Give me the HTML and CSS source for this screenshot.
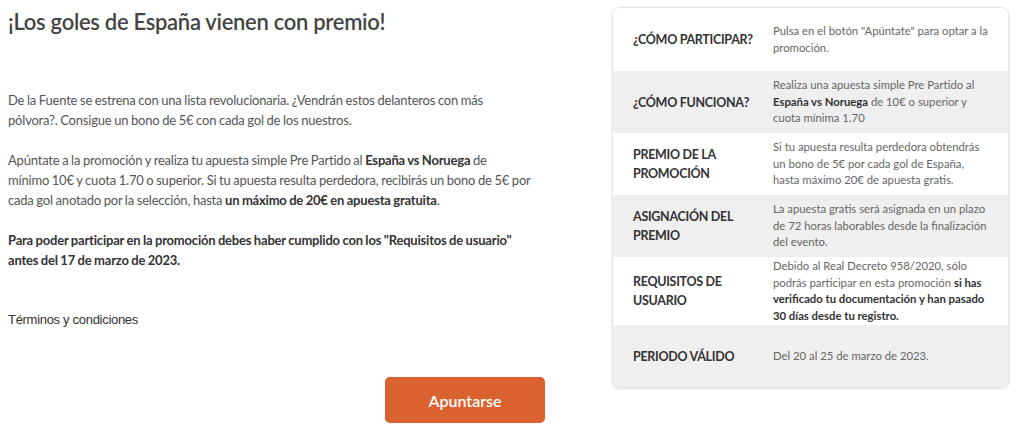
FILE: index.html
```html
<!DOCTYPE html>
<html lang="es">
<head>
    <meta charset="UTF-8">
    <meta name="viewport" content="width=device-width, initial-scale=1.0">
    <title>¡Los goles de España vienen con premio!</title>
    <link rel="stylesheet" href="styles.css">
</head>
<body>
    <div class="page">
        <div class="promo">
            <h1 class="promo-title">¡Los goles de España vienen con premio!</h1>

            <div class="promo-text">
                <p>De la Fuente se estrena con una lista revolucionaria. ¿Vendrán estos delanteros con más pólvora?. Consigue un bono de 5€ con cada gol de los nuestros.</p>
                <p>Apúntate a la promoción y realiza tu apuesta simple Pre Partido al <strong>España vs Noruega</strong> de mínimo&nbsp;10€ y cuota 1.70 o superior. Si tu apuesta resulta perdedora, recibirás un bono de 5€ por cada gol anotado por la selección, hasta <strong>un máximo de 20€ en apuesta gratuita</strong>.</p>
                <p><strong>Para poder participar en la promoción debes haber cumplido con los "Requisitos de usuario" antes del 17 de marzo de 2023.</strong></p>
            </div>

            <div class="terms">Términos y condiciones</div>

            <div class="promo-actions">
                <button class="btn-join">Apuntarse</button>
            </div>
        </div>

        <div class="info-card">
            <div class="info-row">
                <div class="info-label">¿CÓMO PARTICIPAR?</div>
                <div class="info-value">Pulsa en el botón "Apúntate" para optar a la promoción.</div>
            </div>
            <div class="info-row alt">
                <div class="info-label">¿CÓMO FUNCIONA?</div>
                <div class="info-value">Realiza una apuesta simple Pre Partido al <strong>España vs Noruega</strong> de 10€ o superior y cuota mínima 1.70</div>
            </div>
            <div class="info-row">
                <div class="info-label">PREMIO DE LA PROMOCIÓN</div>
                <div class="info-value">Si tu apuesta resulta perdedora obtendrás un bono de 5€ por cada gol de España, hasta máximo 20€ de apuesta gratis.</div>
            </div>
            <div class="info-row alt">
                <div class="info-label">ASIGNACIÓN DEL PREMIO</div>
                <div class="info-value">La apuesta gratis será asignada en un plazo de 72 horas laborables desde la finalización del evento.</div>
            </div>
            <div class="info-row">
                <div class="info-label">REQUISITOS DE USUARIO</div>
                <div class="info-value">Debido al Real Decreto 958/2020, sólo podrás participar en esta promoción <strong>si has verificado tu documentación y han pasado 30 días desde tu registro.</strong></div>
            </div>
            <div class="info-row alt">
                <div class="info-label">PERIODO VÁLIDO</div>
                <div class="info-value">Del 20 al 25 de marzo de 2023.</div>
            </div>
        </div>
    </div>
</body>
</html>
```

FILE: styles.css
```css
body {
    margin: 0;
    font-family: 'Lato', 'Noto Sans', sans-serif;
    color: #555;
    background-color: #fff;
}

.page {
    display: flex;
    align-items: flex-start;
    gap: 67px;
    padding: 7px 15px 0 8px;
}

.promo {
    width: 537px;
    flex-shrink: 0;
}

.promo-title {
    margin: 1px 0 0;
    font-size: 22px;
    line-height: 28px;
    font-weight: 600;
    color: #444;
    letter-spacing: -0.3px;
}

.promo-text {
    width: 525px;
    margin-top: 54px;
    font-size: 13px;
    line-height: 20px;
    letter-spacing: -0.2px;
    word-spacing: -0.4px;
}

.promo-text p {
    margin: 0 0 20px;
}

.promo-text p:last-child {
    margin-bottom: 0;
}

.promo-text strong {
    color: #333;
}

.terms {
    margin-top: 40px;
    font-family: 'Liberation Sans', Arial, sans-serif;
    font-size: 13px;
    line-height: 20px;
    letter-spacing: -0.3px;
    color: #333;
}

.promo-actions {
    display: flex;
    justify-content: flex-end;
    margin-top: 47px;
}

.btn-join {
    width: 160px;
    height: 46px;
    border: none;
    border-radius: 5px;
    background-color: #d9622e;
    color: #fff;
    font-family: 'Lato', sans-serif;
    font-size: 16px;
    font-weight: 600;
    cursor: pointer;
}

.info-card {
    width: 397px;
    flex-shrink: 0;
    border: 1px solid #e4e4e4;
    border-radius: 8px;
    overflow: hidden;
    box-shadow: 0 1px 3px rgba(0, 0, 0, 0.12);
    box-sizing: border-box;
}

.info-row {
    display: grid;
    grid-template-columns: 140px 1fr;
    align-items: center;
    min-height: 62px;
    padding: 1px 16px 1px 20px;
    box-sizing: border-box;
    background-color: #fff;
}

.info-row.alt {
    background-color: #efefef;
}

.info-row:first-child {
    min-height: 63px;
}

.info-label {
    padding-right: 10px;
    font-size: 12.5px;
    line-height: 19px;
    font-weight: 700;
    letter-spacing: -0.3px;
    color: #333;
}

.info-value {
    font-size: 11.3px;
    line-height: 16.5px;
    color: #666;
}

.info-value strong {
    color: #333;
}
```
